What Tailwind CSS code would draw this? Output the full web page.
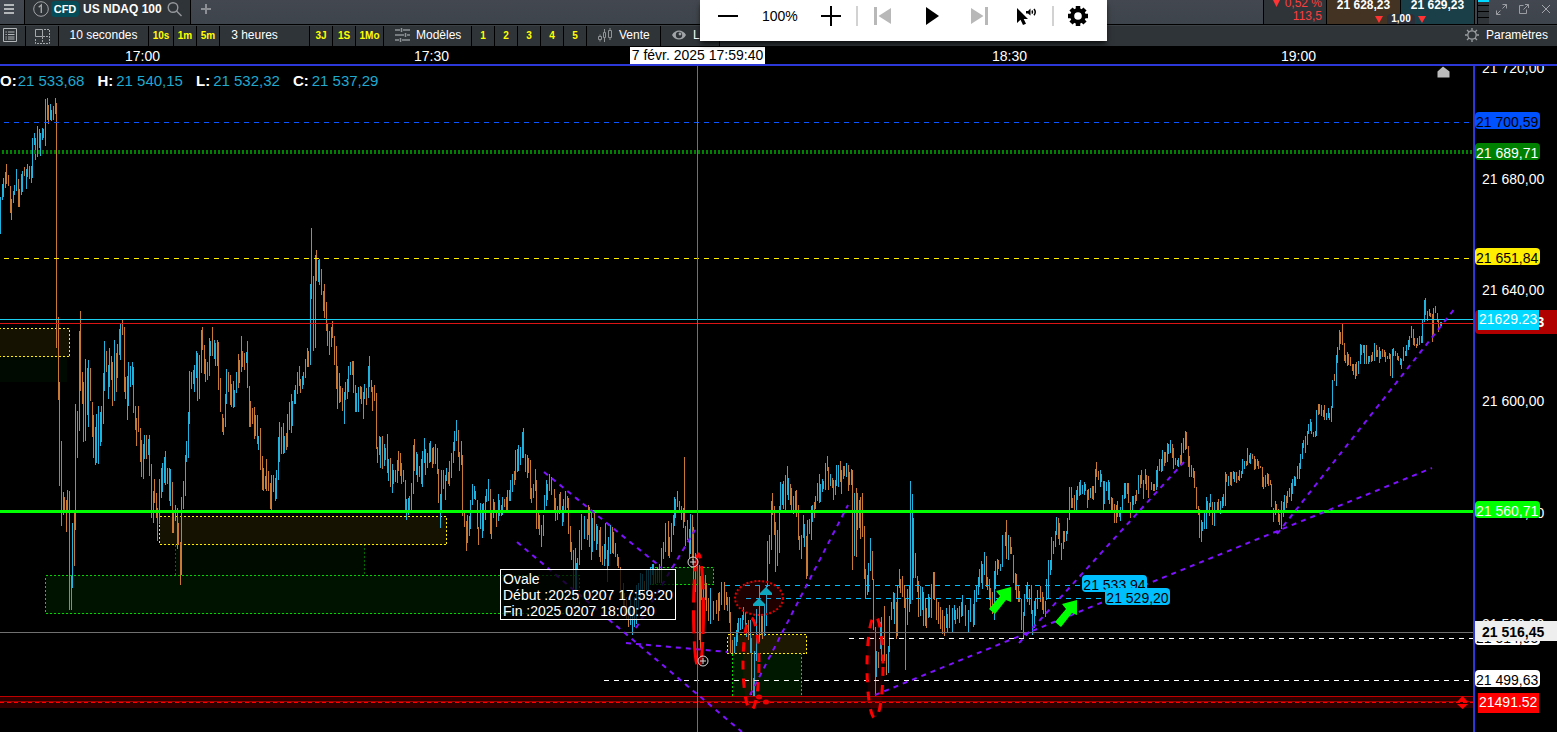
<!DOCTYPE html>
<html lang="fr">
<head>
  <meta charset="UTF-8" />
  <meta name="viewport" content="width=device-width, initial-scale=1.0"/>
  <title>US NDAQ 100 – 10 secondes</title>
  <script src="https://cdn.jsdelivr.net/npm/@tailwindcss/browser@4"></script>
</head>
<body class="h-screen bg-black text-white font-['Liberation_Sans',Arial,sans-serif] text-xs overflow-hidden flex flex-col relative">

  <!-- Tab bar -->
  <header class="h-[25px] shrink-0 flex border-b border-black bg-linear-to-b from-[#434850] to-[#3e444b] overflow-hidden">
    <button aria-label="Menu" class="w-[25px] border-r border-black flex items-start justify-start pl-1 pt-1">
      <svg class="w-[10px] h-[10px]" viewBox="0 0 10 10" stroke="#b4b7ba" stroke-width="2"><path d="M0 1h10M0 5h10M0 9h10"/></svg>
    </button>
    <div class="w-[166px] bg-[#2f3438] border-r border-black flex items-start pl-2 gap-[2px]">
      <svg class="w-4 h-[17px]" viewBox="0 0 16 17" fill="none" stroke="#a3a5a7"><circle cx="8" cy="9" r="7.3"/><path d="M5.7 7.2 8.3 5v8" stroke-width="1.4"/></svg>
      <span class="bg-[#044c58] rounded-sm w-7 h-4 leading-4 mt-px text-[11px] font-bold text-center">CFD</span>
      <span class="leading-4 mt-px ml-[2px] font-bold whitespace-nowrap">US NDAQ 100</span>
      <button aria-label="Rechercher" class="mt-[2px] ml-[3px]">
        <svg class="w-[15px] h-[15px]" viewBox="0 0 15 15" fill="none" stroke="#95989b" stroke-width="1.4"><circle cx="6" cy="5.5" r="4.8"/><path d="M9.5 9l5 5"/></svg>
      </button>
    </div>
    <button aria-label="Ajouter un onglet" class="ml-[10px] mt-1 self-start">
      <svg class="w-[10px] h-[10px]" viewBox="0 0 10 10" stroke="#8c9094" stroke-width="2"><path d="M5 0v10M0 5h10"/></svg>
    </button>

    <div class="ml-auto flex">
      <div class="w-[64px] bg-[#2f3438] border-x border-black text-[#f7403f] text-right pr-1 whitespace-nowrap">
        <div class="-mt-[3px] leading-[13px]"><svg class="inline w-[9px] h-[9px] align-baseline" viewBox="0 0 9 9" fill="#f33"><path d="M0 0h9L4.5 9z"/></svg> 0,52 %</div>
        <div class="leading-[13px]">113,5</div>
      </div>
      <div class="flex relative font-bold text-center leading-[10px]">
        <button class="w-[74px] bg-[#433322] border-r border-black flex justify-center items-start">21 628,23</button>
        <button class="w-[74px] bg-[#1a3f49] border-r border-black flex justify-center items-start">21 629,23</button>
        <div class="absolute left-[60px] bottom-0 w-7 h-[10px] leading-[10px] text-[10px] bg-[#2b303b] rounded-t-sm">1,00</div>
        <svg class="absolute left-[48px] bottom-[1px] w-[51px] h-[8px]" viewBox="0 0 51 8" fill="#f33"><path d="M0 1h8L4 8zM43 1h8l-4 7z"/></svg>
      </div>
      <div class="w-3 bg-[#2f3438] border-l border-black ml-[2px]">
        <svg class="w-full h-full" viewBox="0 0 11 24" preserveAspectRatio="none"><path d="M0 1h11" stroke="#00d8ff" stroke-width="2"/><path d="M0 5.500h11M0 11.500h11M0 17.500h11" stroke="#000"/></svg>
      </div>
      <div class="flex gap-3 pl-[7px] pr-[6px] pt-1 items-start">
        <button aria-label="Agrandir"><svg class="w-[11px] h-[11px]" viewBox="0 0 11 11" fill="none" stroke="#9a9da1"><path d="M6.500 .5h4v4M10.500 .5 6.500 4.500M.5 6.500v4h4M.5 10.500l4-4"/></svg></button>
        <button aria-label="Détacher"><svg class="w-[10px] h-[10px]" viewBox="0 0 10 10" fill="none" stroke="#9a9da1"><path d="M4.500 1.500h-4v8h7v-4M6 .5h3.500V4M9.500 .5l-5 5"/></svg></button>
        <button aria-label="Fermer"><svg class="w-[10px] h-[10px]" viewBox="0 0 10 10" stroke="#a3a6aa"><path d="M1 1l8 8M9 1l-8 8"/></svg></button>
      </div>
    </div>
  </header>

  <!-- Chart toolbar -->
  <nav class="h-[21px] shrink-0 flex bg-[#2f3438] border-t border-[#3b4045] leading-[18px]">
    <button aria-label="Liste" class="w-[26px] border-r border-black pb-[2px] pl-[3px] flex items-center">
      <svg class="w-[14px] h-[14px]" viewBox="0 0 14 14" fill="none" stroke="#b4b7b9"><path d="M.5 .5h13v13H.5zM5 4h6.500M5 6.500h6.500M5 9h6.500M5 11h6.500M2.500 4h1.300M2.500 6.500h1.300M2.500 9h1.300M2.500 11h1.300"/></svg>
    </button>
    <button aria-label="Disposition" class="w-[33px] border-r border-black flex items-center justify-center">
      <svg class="w-[15px] h-[15px]" viewBox="0 0 15 15" fill="none" stroke="#a5a8aa"><path d="M.5 .5h7v7h-7z"/><path d="M9 .5h5.500v14H.5V9M8 7.500h6M7.500 8v6" stroke-dasharray="2 1"/></svg>
    </button>
    <button class="w-[90px] border-r border-black pb-[2px]">10 secondes</button>
    <button class="w-[25px] border-r border-black text-[10px] font-bold text-[#ffff00] leading-5">10s</button>
    <button class="w-[23px] border-r border-black text-[10px] font-bold text-[#ffff00] leading-5">1m</button>
    <button class="w-[23px] border-r border-black text-[10px] font-bold text-[#ffff00] leading-5">5m</button>
    <button class="w-[90px] border-r border-black pb-[2px] pr-5">3 heures</button>
    <button class="w-[23px] border-r border-black text-[10px] font-bold text-[#ffff00] leading-5">3J</button>
    <button class="w-[23px] border-r border-black text-[10px] font-bold text-[#ffff00] leading-5">1S</button>
    <button class="w-[28px] border-r border-black text-[10px] font-bold text-[#ffff00] leading-5">1Mo</button>
    <button class="w-[88px] border-r border-black pb-[2px] flex items-center gap-[6px] pl-[11px]">
      <svg class="w-[15px] h-[14px]" viewBox="0 0 15 14" stroke="#8f9396" stroke-width="1.500"><path d="M0 2h5M8 2h7M0 7h9M12 7h3M0 12h4M7 12h8M6.500 0v4M10.500 5v4M5.500 10v4"/></svg>Modèles
    </button>
    <button class="w-[23px] border-r border-black text-[10px] font-bold text-[#ffff00] leading-5">1</button>
    <button class="w-[23px] border-r border-black text-[10px] font-bold text-[#ffff00] leading-5">2</button>
    <button class="w-[23px] border-r border-black text-[10px] font-bold text-[#ffff00] leading-5">3</button>
    <button class="w-[23px] border-r border-black text-[10px] font-bold text-[#ffff00] leading-5">4</button>
    <button class="w-[23px] border-r border-black text-[10px] font-bold text-[#ffff00] leading-5">5</button>
    <button class="w-[74px] border-r border-black pb-[2px] flex items-center gap-[7px] pl-[11px]">
      <svg class="w-[14px] h-[14px]" viewBox="0 0 14 14" fill="none" stroke="#8f9396"><path d="M.5 8.500h3v3h-3zM2 6.500v2M2 11.500v2M5.500 4.500h2v5h-2zM6.500 1v3.500M6.500 9.500V14M10.500 2.500h3v7h-3zM12 0v2.500M12 9.500v2.500"/></svg>Vente
    </button>
    <button class="w-[59px] border-r border-black pb-[2px] flex items-center gap-[7px] pl-[11px] overflow-hidden">
      <svg class="w-[14px] h-[10px] shrink-0" viewBox="0 0 14 10"><path d="M0 5C3-1 11-1 14 5 11 11 3 11 0 5z" fill="#a2a5a8"/><circle cx="7" cy="5" r="3.200" fill="#2f3438"/><circle cx="8" cy="4" r="1.400" fill="#a2a5a8"/></svg>Liste
    </button>
    <button class="ml-auto mr-[9px] pb-[2px] flex items-center gap-[7px]">
      <svg class="w-[14px] h-[14px]" viewBox="0 0 14 14" fill="none" stroke="#9b9ea1" stroke-width="1.300"><circle cx="7" cy="7" r="4.200"/><path d="M7 0v2.500M7 11.500V14M0 7h2.500M11.500 7H14M2 2l2 2M10 10l2 2M12 2l-2 2M4 10l-2 2"/></svg>Paramètres
    </button>
  </nav>

  <!-- Time axis -->
  <div class="h-5 shrink-0 relative border-b-2 border-[#2d38d8] text-sm leading-[20px]">
    <span class="absolute left-[125px]">17:00</span>
    <span class="absolute left-[414px]">17:30</span>
    <span class="absolute left-[992px]">18:30</span>
    <span class="absolute left-[1281px]">19:00</span>
    <span class="absolute left-[630px] top-px h-[17px] leading-[17px] w-[135px] text-center bg-white text-black whitespace-nowrap">7 févr. 2025 17:59:40</span>
  </div>

  <main class="flex-1 min-h-0 flex">
    <!-- Plot -->
    <section class="flex-1 min-w-0 relative overflow-hidden">
      <svg class="absolute inset-0 w-full h-full" shape-rendering="crispEdges">
        <g transform="translate(0 -66)" fill="none">
          <!-- zones -->
          <rect x="-5" y="357" width="72" height="25" fill="#000a00"/>
          <rect x="-5.500" y="328.500" width="75" height="28" fill="#151202" stroke="#ffee00" stroke-dasharray="2 2"/>
          <rect x="175.500" y="544.500" width="189" height="34" fill="#000b00" stroke="#006a00" stroke-dasharray="2 2"/>
          <rect x="159.500" y="516.500" width="287" height="28" fill="#151202" stroke="#ffee00" stroke-dasharray="2 2"/>
          <rect x="45.500" y="575.500" width="534" height="38" fill="#001200" stroke="#00d800" stroke-dasharray="2 2"/>
          <rect x="650.500" y="567.500" width="63" height="17" fill="#001800" stroke="#00d800" stroke-dasharray="2 2"/>
          <rect x="732.500" y="653.500" width="69" height="44" fill="#001800" stroke="#00d800" stroke-dasharray="2 2"/>
          <rect x="727.500" y="634.500" width="79" height="19" fill="#1c1802" stroke="#ffee00" stroke-dasharray="2 2"/>
          <rect x="0" y="697" width="100%" height="11" fill="#300000"/>

          <path id="up" stroke="#1fb4dd"/>
          <path id="down" stroke="#c87a34"/>

          <!-- levels -->
          <line x1="4" x2="100%" y1="122.500" y2="122.500" stroke="#0a55ff" stroke-dasharray="5 5"/>
          <line x1="2" x2="100%" y1="152" y2="152" stroke="#008000" stroke-width="4" stroke-dasharray="2 2"/>
          <line x1="4" x2="100%" y1="258.500" y2="258.500" stroke="#ffee00" stroke-dasharray="5 5"/>
          <line x1="0" x2="100%" y1="319.500" y2="319.500" stroke="#1ccdf0"/>
          <line x1="0" x2="100%" y1="323.500" y2="323.500" stroke="#dd1414"/>
          <line x1="0" x2="100%" y1="511.500" y2="511.500" stroke="#00ff00" stroke-width="3"/>
          <line x1="725" x2="1082" y1="585.500" y2="585.500" stroke="#00bfff" stroke-dasharray="5 5"/>
          <line x1="746" x2="1105" y1="598.500" y2="598.500" stroke="#00bfff" stroke-dasharray="5 5"/>
          <line x1="849" x2="100%" y1="638.500" y2="638.500" stroke="#fff" stroke-dasharray="5 5"/>
          <line x1="604" x2="100%" y1="680.500" y2="680.500" stroke="#fff" stroke-dasharray="5 5"/>
          <line x1="0" x2="100%" y1="696.500" y2="696.500" stroke="#c00000"/>
          <line x1="0" x2="100%" y1="701.500" y2="701.500" stroke="#a00000"/>
          <line x1="0" x2="100%" y1="702.500" y2="702.500" stroke="#ff0000" stroke-dasharray="4 3"/>

          <!-- crosshair -->
          <line x1="0" x2="100%" y1="632.500" y2="632.500" stroke="#707070"/>
          <line x1="697.500" x2="697.500" y1="66" y2="2000" stroke="#707070"/>
        </g>
        <g transform="translate(0 -66)" fill="none" shape-rendering="auto">
          <!-- trend lines -->
          <path stroke="#7d12ff" stroke-width="2" stroke-dasharray="5 5" d="M544 472 662 568M517 542 742 732M626 643 728 652M636 628 695 530M750 695 848 505M875 695 1432 468M1019 643 1184 462M1277 534 1456 307"/>

          <!-- ovals -->
          <ellipse cx="698.500" cy="611" rx="5" ry="57" fill="#ff0000" fill-opacity=".1" stroke="#ff0000" stroke-width="3" stroke-dasharray="23 8"/>
          <ellipse cx="751" cy="664" rx="8" ry="46" fill="#ff0000" fill-opacity=".08" stroke="#ff0000" stroke-width="3" stroke-dasharray="9 9"/>
          <ellipse cx="875" cy="667" rx="8" ry="51" fill="#ff0000" fill-opacity=".08" stroke="#ff0000" stroke-width="3" stroke-dasharray="9 9"/>
          <ellipse cx="759" cy="598" rx="24" ry="17" fill="#ff0000" fill-opacity=".12" stroke="#e00000" stroke-width="2" stroke-dasharray="2 2"/>
          <g fill="#ee0000"><ellipse cx="759" cy="697" rx="3" ry="2.500"/><ellipse cx="766" cy="702" rx="3" ry="2.500"/></g>
          <g stroke="#d8d8d8" fill="#000" fill-opacity=".35"><circle cx="693" cy="562" r="5"/><path d="M690 562h6M693 559v6"/><circle cx="703" cy="661" r="5"/><path d="M700 661h6M703 658v6"/></g>

          <!-- markers -->
          <path fill="#0fa7c0" d="M760 593l6-6 6 6v2h-12zM753 604l6-6 6 6v2h-12z"/>
          <path fill="#00ff00" d="M1011 587 996 591l4 5-11 13 6 5 11-14 5 2zM1077 600l-15 4 4 5-11 13 6 5 11-14 5 2z"/>
          <path d="M1437.500 77.500v-6l5.500-5 6.500 5v6z" fill="#bcbcbc"/>
          <path d="M1457 702l5.500-6 5.500 6zM1457 704l5.500 5 5.500-5z" fill="#ff0000"/>
        </g>
      </svg>

      <!-- OHLC -->
      <dl class="relative flex gap-[13px] pt-[6px] text-[15px] leading-[18px] text-[#1fa9cf] whitespace-nowrap">
        <div class="flex gap-px"><dt class="font-bold text-white">O:</dt><dd>21 533,68</dd></div>
        <div class="flex gap-[3px]"><dt class="font-bold text-white">H:</dt><dd>21 540,15</dd></div>
        <div class="flex gap-[3px]"><dt class="font-bold text-white">L:</dt><dd>21 532,32</dd></div>
        <div class="flex gap-[3px]"><dt class="font-bold text-white">C:</dt><dd>21 537,29</dd></div>
      </dl>

      <div class="absolute left-[1082px] top-[509px] w-[65px] h-[17px] rounded-sm bg-[#00bfff] text-black text-sm leading-[20px] text-center overflow-hidden">21 533,94</div>
      <div class="absolute left-[1105px] top-[522px] w-[65px] h-[17px] rounded-sm bg-[#00bfff] text-black text-sm leading-[20px] text-center overflow-hidden">21 529,20</div>

      <div class="absolute left-[500px] top-[503px] border border-white bg-black/75 pl-[2px] pr-[2px] pt-px text-sm leading-4 whitespace-nowrap">
        <p>Ovale</p>
        <p>Début :2025 0207 17:59:20</p>
        <p>Fin :2025 0207 18:00:20</p>
      </div>
    </section>

    <!-- Price axis -->
    <aside class="w-[84px] shrink-0 relative overflow-hidden border-l-2 border-[#2d38d8] text-sm leading-4 whitespace-nowrap">
      <span class="absolute left-[7px] top-[-6px]">21 720,00</span>
      <span class="absolute left-[7px] top-[105px]">21 680,00</span>
      <span class="absolute left-[7px] top-[216px]">21 640,00</span>
      <span class="absolute left-[7px] top-[327px]">21 600,00</span>
      <span class="absolute left-[7px] top-[439px]">21 560,00</span>
      <span class="absolute left-[7px] top-[550px]">21 520,00</span>
      <span class="absolute left-0 top-[46px] w-[65px] h-[17px] leading-[20px] pl-px rounded-sm bg-[#0051ff] text-black">21 700,59</span>
      <span class="absolute left-0 top-[77px] w-[65px] h-[17px] leading-[20px] pl-px rounded-sm bg-[#008000]">21 689,71</span>
      <span class="absolute left-0 top-[182px] w-[65px] h-[17px] leading-[20px] pl-px rounded-sm bg-[#ffee00] text-black">21 651,84</span>
      <span class="absolute left-0 right-0 top-[244px] h-6 leading-6 pl-[7px] rounded-l-sm bg-[#b00000] font-bold">21 628,23</span>
      <span class="absolute left-[3px] top-[244px] w-[61px] h-5 leading-[19px] pl-px bg-[#00d8ff]">21629.23</span>
      <span class="absolute left-0 top-[435px] w-[65px] h-[17px] leading-[20px] pl-px rounded-sm bg-[#00ff00] overflow-hidden">21 560,71</span>
      <span class="absolute left-0 top-[562px] w-[65px] h-[17px] leading-[20px] pl-px rounded-sm bg-white text-black overflow-hidden">21 514,95</span>
      <span class="absolute left-0 right-0 top-[555px] h-5 leading-[22px] pl-[7px] bg-[#eee] text-black font-bold">21 516,45</span>
      <span class="absolute left-0 top-[604px] w-[65px] h-[17px] leading-[20px] pl-px rounded-sm bg-white text-black">21 499,63</span>
      <span class="absolute left-[3px] top-[627px] w-[61px] h-5 leading-[19px] pl-px bg-[#ff0000]">21491.52</span>
    </aside>
  </main>

  <!-- Floating playback bar -->
  <div class="absolute left-[700px] top-0 w-[407px] h-[41px] bg-white text-black shadow-md shadow-black/60 flex items-center pb-[9px] pl-[18px]">
    <button aria-label="Réduire"><svg class="w-5 h-5 block" viewBox="0 0 20 20"><path d="M0 10h20" stroke="#000" stroke-width="2"/></svg></button>
    <span class="ml-6 w-[36px] text-sm leading-4">100%</span>
    <button aria-label="Augmenter" class="ml-[23px]"><svg class="w-5 h-5 block" viewBox="0 0 20 20"><path d="M0 10h20M10 0v20" stroke="#000" stroke-width="2"/></svg></button>
    <span class="ml-[15px] w-[2px] h-5 bg-[#d2d2d2]"></span>
    <button aria-label="Précédent" class="ml-4"><svg class="w-[17px] h-[18px] block" viewBox="0 0 17 18" fill="#b8b8b8"><path d="M0 0h3v18H0zM17 1v16L4.500 9z"/></svg></button>
    <button aria-label="Lecture" class="ml-[35px]"><svg class="w-[13px] h-[18px] block" viewBox="0 0 13 18"><path d="M0 0l13 9-13 9z"/></svg></button>
    <button aria-label="Suivant" class="ml-8"><svg class="w-[17px] h-[18px] block" viewBox="0 0 17 18" fill="#b8b8b8"><path d="M14 0h3v18h-3zM0 1v16l12.500-8z"/></svg></button>
    <button aria-label="Lire à partir d'ici" class="ml-7"><svg class="w-[22px] h-[18px] block" viewBox="0 0 22 18"><path d="M1 1v15l3.500-3.200L7 18l3-1.300L7.700 12H12zM10 4h2l2.500-2.500v7L12 6.500h-2z"/><path d="M16 3.500q1 1.500 0 3.200M18 2q2.500 3 0 6.200" fill="none" stroke="#000" stroke-width="1.500"/></svg></button>
    <span class="ml-[14px] w-[2px] h-5 bg-[#d2d2d2]"></span>
    <button aria-label="Réglages" class="ml-[14px]"><svg class="w-5 h-5 block" viewBox="-10 -10 20 20"><circle r="5.800" fill="none" stroke="#000" stroke-width="4"/><path d="M0-10V-6M0 6v4M-10 0h4M6 0h4M-7-7l3 3M4 4l3 3M7-7 4-4M-4 4l-3 3" stroke="#000" stroke-width="4.500"/></svg></button>
  </div>

  <script>
    // x, high, low for each bar, in chart pixels
    const up = `0 197 234,2 184 200,3 178 197,5 172 188,11 199 220,13 191 203,14 185 195,16 169 191,19 189 207,21 174 195,22 171 192,26 169 189,27 164 177,32 138 178,34 133 145,37 126 157,40 133 156,42 128 140,45 99 146,50 104 120,53 106 120,55 98 114,
      63 492 515,67 490 510,72 523 588,75 404 530,79 331 431,85 359 441,87 368 415,88 360 427,96 414 463,98 406 464,100 412 446,101 406 442,103 373 424,104 341 391,108 365 399,109 348 387,114 340 401,117 344 378,120 324 360,127 376 420,128 362 406,130 366 387,132 362 385,143 444 479,144 435 459,148 439 455,
      153 491 523,159 479 524,161 468 498,162 463 492,164 457 483,170 469 506,173 512 533,175 505 521,181 497 575,183 481 509,185 455 496,186 441 462,188 412 458,189 371 424,194 365 392,196 351 378,199 355 399,201 330 373,205 359 382,209 338 376,210 341 356,214 340 359,217 340 366,223 418 435,225 394 427,226 369 404,231 384 407,234 390 407,236 372 393,239 360 383,241 336 372,246 352 363,
      255 415 436,258 436 450,263 468 491,265 476 489,271 475 511,273 475 492,276 470 499,278 437 480,279 422 462,283 423 454,284 436 453,287 414 447,289 402 430,292 401 426,294 390 404,295 385 404,297 372 394,302 376 389,303 372 385,305 359 378,307 348 367,310 284 365,311 228 299,315 255 348,318 260 282,331 327 347,339 373 403,344 392 424,345 382 400,348 366 392,350 362 375,356 393 412,358 387 412,363 392 419,364 384 399,368 366 398,
      380 437 468,384 444 466,388 459 481,392 464 493,395 470 482,397 460 483,406 499 520,408 498 515,411 483 511,413 445 494,416 452 475,421 459 484,422 451 487,424 438 463,427 453 468,430 441 462,433 447 464,435 444 464,440 494 528,441 470 510,445 475 500,446 468 481,449 461 486,451 453 478,453 442 463,454 431 451,456 420 441,461 441 465,467 515 543,470 500 529,472 484 505,474 486 499,480 503 529,482 504 538,485 496 520,486 489 502,488 479 501,491 510 539,493 499 518,498 494 521,501 505 516,502 497 515,507 490 510,509 490 501,
      510 480 501,512 474 492,515 450 480,517 449 472,518 445 471,520 447 465,522 432 458,527 455 478,533 484 498,541 525 547,543 515 536,544 495 510,546 480 506,547 484 500,549 474 491,559 494 514,562 506 526,565 491 511,575 548 590,576 563 590,577 558 570,579 530 565,581 514 550,584 516 539,589 507 547,591 513 560,592 518 552,596 524 550,604 544 566,607 550 582,608 537 566,610 525 554,623 583 610,630 593 625,632 610 635,634 597 627,636 585 624,638 583 610,640 573 600,642 574 593,646 570 590,648 570 590,650 567 585,652 564 575,655 569 584,659 564 583,
      661 548 583,663 542 559,665 523 552,671 523 552,673 515 535,674 497 526,675 499 518,677 491 507,683 508 528,685 526 546,690 514 554,701 577 600,703 577 627,705 575 600,710 588 624,713 601 620,719 592 611,721 582 605,734 637 653,736 630 646,737 623 642,738 618 632,740 618 630,742 615 629,746 623 637,750 620 653,754 651 696,756 609 661,761 614 635,764 606 636,766 585 626,767 541 587,771 501 550,777 530 566,779 506 553,780 482 511,782 484 505,785 475 510,788 478 500,793 496 514,
      801 535 559,803 515 538,804 524 547,807 520 576,811 506 540,812 505 522,815 496 509,817 483 501,820 484 502,822 479 492,823 481 489,825 463 490,830 474 486,835 480 495,836 465 486,838 465 487,841 470 494,846 463 477,851 469 485,854 493 556,867 575 595,868 563 592,870 538 571,876 651 677,880 622 649,881 617 661,888 646 673,889 616 652,891 602 620,894 593 624,897 585 636,907 589 625,909 585 612,910 481 604,912 494 600,920 586 616,922 587 610,928 594 618,929 597 617,933 572 599,
      931 584 618,946 608 628,947 614 633,949 605 628,952 608 632,954 605 620,959 606 623,962 595 616,968 610 632,970 598 622,974 590 625,976 585 602,978 577 595,981 561 583,982 564 589,984 552 575,994 571 620,995 561 589,997 559 575,1000 564 571,1002 535 567,1005 532 546,1008 535 560,1023 612 638,1024 594 616,1026 585 598,1029 589 605,1032 610 635,1034 601 628,1035 598 616,1037 590 609,1046 579 600,1048 560 598,1050 560 575,1051 537 570,1053 541 554,1055 531 547,1056 517 535,1061 543 560,1063 531 549,1066 531 541,1067 518 534,1069 487 520,
      1076 490 510,1077 486 500,1079 482 496,1080 480 495,1082 485 494,1084 482 495,1090 488 498,1093 486 500,1095 469 493,1100 470 487,1101 474 482,1104 481 504,1106 482 491,1108 480 500,1117 501 517,1119 510 517,1120 507 521,1122 495 510,1124 483 499,1125 483 498,1132 496 510,1138 475 494,1143 480 499,1151 482 490,1153 484 491,1156 470 490,1157 466 487,1159 459 471,1161 459 472,1162 450 471,1167 443 462,1168 444 454,1170 440 453,1175 458 465,1177 460 466,1178 458 467,1181 443 464,1185 431 450,
      1191 465 477,1201 520 542,1202 522 531,1204 513 529,1206 497 529,1210 494 507,1214 502 526,1217 502 512,1220 501 514,1222 497 508,1225 472 506,1228 476 486,1233 471 479,1234 472 482,1239 470 481,1241 471 478,1242 459 474,1244 461 469,1247 448 465,1249 455 463,1250 453 464,1255 459 469,1263 477 489,1267 473 484,1275 501 515,1281 501 529,1284 495 511,1287 491 503,1289 488 497,1291 483 501,1292 479 494,1294 476 486,1295 477 486,1297 466 479,1299 463 479,1300 454 469,1302 443 459,1305 436 453,1307 431 445,1308 424 434,1310 419 431,1315 431 437,1316 410 436,1323 410 417,1326 413 420,1328 408 418,1331 406 422,1332 380 408,1336 355 386,1337 347 363,1339 330 350,
      1347 352 366,1355 364 379,1358 361 374,1360 344 364,1364 345 364,1368 356 364,1371 355 362,1374 343 361,1380 351 359,1389 353 359,1392 349 378,1400 358 365,1403 347 361,1406 345 356,1408 340 350,1409 336 347,1411 326 338,1417 338 346,1419 336 345,1422 320 343,1424 300 322,1427 311 321,1433 308 335,1440 322 327,1441 322 326`;

    const down = `6 164 184,8 175 186,10 186 213,18 179 207,24 167 176,29 166 179,31 166 183,35 138 160,39 129 148,43 129 138,47 98 120,48 105 124,51 110 121,56 103 348,58 317 400,59 382 486,61 441 526,64 497 512,66 500 532,69 491 610,71 576 610,74 512 566,77 411 458,80 311 391,82 372 404,83 382 442,90 368 401,92 402 437,93 415 458,95 427 465,
      106 351 372,111 356 380,112 362 406,116 353 392,119 329 355,122 320 335,124 327 392,125 377 399,133 367 413,135 406 430,136 418 446,138 406 432,140 428 462,141 440 477,146 435 459,149 435 476,151 464 518,154 479 503,156 493 518,157 508 541,165 451 485,167 468 484,169 468 501,172 482 533,177 508 549,178 523 545,180 542 585,
      191 372 389,193 370 384,197 353 401,202 327 350,204 345 374,207 362 380,212 327 356,215 343 366,218 342 390,220 378 412,222 414 432,228 372 392,230 375 405,233 381 408,238 354 388,242 351 367,244 353 370,247 341 388,249 386 427,250 401 427,252 408 424,254 407 439,257 415 444,260 428 470,262 456 490,266 459 491,268 471 491,270 483 509,275 478 501,281 427 454,286 433 450,291 394 433,299 366 386,300 379 393,308 351 367,
      313 276 351,316 250 281,319 259 285,321 269 295,323 291 311,324 284 318,326 302 331,327 324 346,329 331 355,332 321 338,334 336 365,336 346 389,337 366 409,340 386 402,342 388 411,347 379 399,352 361 375,353 361 393,355 385 412,360 386 399,361 387 404,366 388 405,369 356 387,371 380 392,372 387 411,374 385 401,376 393 449,377 447 463,379 436 455,382 436 469,385 448 460,387 434 473,390 458 487,393 470 484,398 451 471,400 453 476,401 463 484,403 470 482,405 480 510,409 496 512,414 439 471,417 454 482,419 466 477,425 449 475,429 443 463,432 448 468,437 448 474,438 469 503,443 470 489,448 472 484,458 430 457,459 452 471,
      462 455 516,464 511 527,466 521 551,469 516 536,475 491 500,477 500 529,478 527 545,483 503 531,490 489 534,494 502 511,496 510 527,499 500 516,504 499 507,506 497 511,514 471 485,523 428 458,525 454 472,528 458 473,530 460 499,531 488 503,535 469 491,536 480 529,538 510 529,539 515 535,551 477 495,554 489 513,555 498 521,557 506 520,560 492 510,563 499 522,567 496 508,568 498 534,570 526 552,571 542 560,573 550 600,587 519 540,588 505 535,594 513 541,597 526 544,599 530 557,600 527 562,602 546 565,605 523 559,612 527 553,613 532 554,615 543 557,617 554 566,618 557 568,620 567 600,624 593 615,626 597 620,628 607 627,
      644 581 593,653 564 585,657 567 583,668 521 556,669 537 558,679 501 510,681 506 520,684 457 522,687 520 540,689 529 559,692 515 560,693 527 590,695 553 592,699 565 640,700 576 650,706 583 611,708 598 621,716 600 614,718 593 621,724 582 610,726 592 605,727 597 611,729 597 623,730 612 653,732 640 653,743 607 620,745 612 633,748 620 640,751 638 695,753 678 696,759 586 642,762 616 639,769 535 564,772 493 515,774 506 535,775 522 572,783 481 509,787 466 495,790 484 505,791 488 511,795 491 512,796 490 517,798 505 540,799 536 550,806 536 579,809 519 534,814 502 518,819 474 503,827 456 471,828 467 490,832 478 488,833 480 500,840 461 482,843 466 479,844 466 476,848 465 491,849 472 485,
      852 470 570,856 488 557,857 493 530,859 500 528,860 497 539,862 493 537,864 526 579,865 569 599,872 551 580,873 579 630,875 627 696,878 652 668,884 606 661,886 654 675,893 592 609,896 602 639,899 569 588,900 579 593,902 576 597,904 585 608,905 598 670,913 518 578,915 553 578,917 576 592,918 581 617,923 592 626,925 598 626,926 608 628,931 594 618,934 572 600,936 598 620,938 602 624,940 607 629,942 610 634,944 616 636,955 610 624,957 608 619,961 602 617,965 605 626,973 604 627,979 569 587,986 556 587,987 577 590,989 579 600,990 588 609,992 592 614,998 560 569,1006 520 559,1010 537 554,1011 547 554,1013 555 583,1015 573 590,1016 574 598,1018 586 602,1019 591 602,1021 599 630,1027 582 602,1031 585 614,1040 586 602,1042 592 610,1043 597 614,1045 601 617,
      1058 518 539,1059 523 545,1064 531 542,1071 487 508,1072 498 508,1074 495 510,1085 484 491,1087 490 508,1088 489 500,1092 486 499,1096 462 477,1098 471 480,1103 481 510,1109 482 504,1111 497 510,1112 498 512,1114 504 523,1116 505 523,1127 483 494,1128 483 503,1130 502 518,1133 496 505,1135 495 504,1136 490 501,1140 475 488,1141 470 484,1145 469 484,1146 475 490,1148 476 498,1154 484 491,1164 452 466,1165 452 463,1172 444 458,1173 448 469,1180 455 465,1183 438 453,1186 432 449,1188 446 467,1189 456 477,1193 468 478,1194 471 488,1196 487 509,1198 506 515,1199 509 538,1207 501 513,1209 503 516,1212 502 525,1218 499 510,1223 494 506,1226 474 482,1230 472 485,1231 472 486,1236 472 483,1238 476 480,1246 461 466,1252 454 459,1254 456 470,1257 459 466,1258 461 469,1260 466 468,1262 467 487,1265 475 487,1268 474 486,1270 480 485,1271 484 507,1273 508 522,1276 504 510,1278 509 522,1279 514 525,1283 502 517,1286 496 508,
      1303 440 448,1311 422 434,1313 432 437,1318 404 415,1319 404 414,1321 405 416,1324 405 420,1329 413 420,1334 374 381,1340 332 344,1342 324 345,1344 343 361,1345 355 363,1348 354 365,1350 357 366,1352 364 371,1353 364 375,1356 362 376,1361 345 355,1363 345 353,1366 345 364,1369 356 362,1372 352 361,1376 345 357,1377 350 357,1379 347 363,1382 349 357,1384 350 357,1385 352 362,1387 356 359,1390 354 376,1393 348 356,1395 351 356,1397 353 360,1398 356 361,1401 359 369,1405 351 356,1413 329 345,1414 338 346,1416 344 348,1421 336 343,1425 298 315,1429 309 316,1430 313 317,1432 314 342,1435 306 313,1437 313 322,1438 320 332`;

    function drawBars(id, data) {
      const d = data.split(',').map(bar => {
        const [x, high, low] = bar.trim().split(' ').map(Number);
        return `M${x + 0.5} ${high}V${low}`;
      }).join('');
      document.getElementById(id).setAttribute('d', d);
    }

    drawBars('up', up);
    drawBars('down', down);
  </script>
</body>
</html>
